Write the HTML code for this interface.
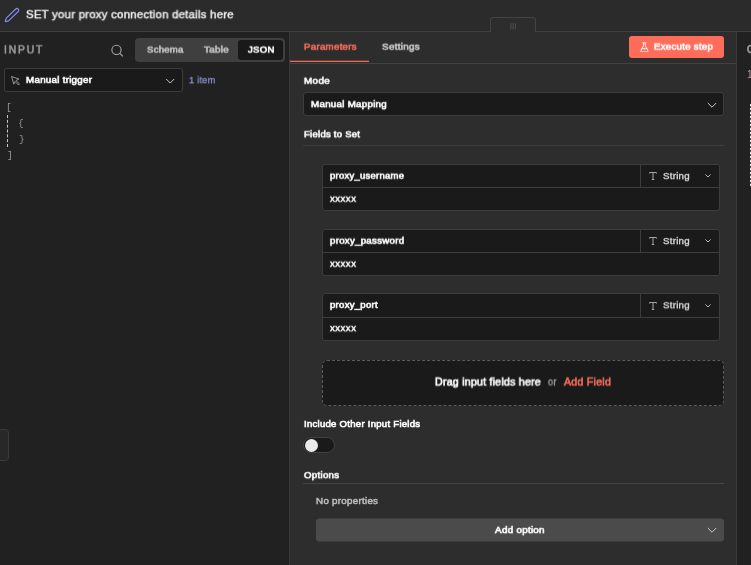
<!DOCTYPE html>
<html>
<head>
<meta charset="utf-8">
<title>n8n node</title>
<style>
*{box-sizing:border-box;margin:0;padding:0}
html,body{width:751px;height:565px;overflow:hidden;background:#2d2d2d;font-family:"Liberation Sans",sans-serif;color:#fff;font-size:10.5px}
.a,.t,svg{position:absolute}
.t{left:0;top:0;white-space:nowrap;font-weight:bold;will-change:transform;transform-origin:0 0;line-height:14px}
.inp{background:#1a1a1a;border:1px solid #3d3d3d;border-radius:3px}
.ln{background:#3d3d3d}
</style>
</head>
<body>
<!-- PANELS -->
<div class="a" style="left:0;top:0;width:751px;height:32px;background:#2b2b2b;border-bottom:1px solid #3e3e3e"></div>
<div class="a" style="left:0;top:32px;width:290px;height:533px;background:#212121;border-right:1px solid #383838"></div>
<div class="a" style="left:290px;top:32px;width:446px;height:533px;background:#2d2d2d"></div>
<div class="a" style="left:736px;top:32px;width:15px;height:533px;background:#212121;border-left:1px solid #3a3a3a"></div>
<!-- drag handle tab -->
<div class="a" style="left:490px;top:17px;width:46px;height:15px;background:#2d2d2d;border:1px solid #434343;border-bottom:none;border-radius:3px 3px 0 0"></div>
<svg style="left:508px;top:20px" width="12" height="12" viewBox="0 0 12 12"><path d="M2.9 3.2 V9.4 M5.15 3.2 V9.4 M7.4 3.2 V9.4" stroke="#515151" stroke-width="1" fill="none"/></svg>
<!-- pencil -->
<svg style="left:0;top:0" width="26" height="30" viewBox="0 0 26 30"><g transform="translate(5.3,21.6) rotate(-44.2)"><path d="M0 0 L2.8 -1.75 H16.3 A1.75 1.75 0 0 1 16.3 1.75 H2.8 Z" fill="none" stroke="#8789f5" stroke-width="1.15" stroke-linejoin="round"/></g></svg>

<!-- LEFT PANEL -->
<svg style="left:110.4px;top:42.6px" width="14" height="14" viewBox="0 0 14 14"><circle cx="6.5" cy="6.9" r="4.6" fill="none" stroke="#a6a6a6" stroke-width="1.1"/><path d="M9.8 10.3 L12.5 13" stroke="#a6a6a6" stroke-width="1.1" stroke-linecap="round"/></svg>
<div class="a" style="left:135px;top:38px;width:150px;height:24px;background:#3f3f3f;border-radius:4px"></div>
<div class="a" style="left:238px;top:40px;width:45px;height:20px;background:#191919;border-radius:3px"></div>
<div class="a inp" style="left:4px;top:68px;width:179px;height:24px"></div>
<svg style="left:10px;top:75px" width="12" height="12" viewBox="0 0 12 12"><path d="M1.5 1.5 L9 4 L6 5.5 L9.5 9 L8.5 10 L5 6.5 L3.8 9.2 Z" fill="none" stroke="#b0b0b0" stroke-width="0.8" stroke-linejoin="round"/></svg>
<svg style="left:165px;top:77px" width="10" height="8" viewBox="0 0 10 8"><path d="M1.2 2 L5.2 6 L9.2 2" fill="none" stroke="#c8c8c8" stroke-width="1"/></svg>
<div class="a" style="left:7px;top:115px;width:0;height:32px;border-left:1px dashed #c8c8c8"></div>
<div class="a" style="left:-3px;top:429px;width:12px;height:32px;background:#282828;border:1px solid #3a3a3a;border-radius:4px"></div>

<!-- CENTER PANEL -->
<div class="a ln" style="left:290px;top:63px;width:446px;height:1px;background:#424242"></div>
<div class="a" style="left:290px;top:60px;width:79px;height:1px;background:#6a3d37"></div>
<div class="a" style="left:290px;top:61px;width:79px;height:1px;background:#f06c59"></div>
<div class="a" style="left:629px;top:36px;width:95px;height:22px;background:#ff6d5a;border-radius:3px"></div>
<svg style="left:638.5px;top:41.6px" width="10.8" height="10.8" viewBox="0 0 24 24" fill="none" stroke="#fff" stroke-width="2" stroke-linecap="round" stroke-linejoin="round"><path d="M14 2v6a2 2 0 0 0 .245.96l5.51 10.08A2 2 0 0 1 18 22H6a2 2 0 0 1-1.755-2.96l5.51-10.08A2 2 0 0 0 10 8V2"/><path d="M6.453 15h11.094"/><path d="M8.5 2h7"/></svg>

<div class="a inp" style="left:303px;top:92px;width:421px;height:24px"></div>
<svg style="left:707px;top:100.6px" width="10" height="8" viewBox="0 0 10 8"><path d="M0.8 2 L5 6.2 L9.2 2" fill="none" stroke="#c8c8c8" stroke-width="1"/></svg>
<div class="a ln" style="left:303px;top:145px;width:421px;height:1px"></div>

<!-- field rows -->
<div class="a inp" style="left:322px;top:164px;width:398px;height:47px"></div>
<div class="a ln" style="left:323px;top:187px;width:396px;height:1px"></div>
<div class="a ln" style="left:640px;top:165px;width:1px;height:22px"></div>
<svg style="left:648px;top:171px" width="10" height="10" viewBox="0 0 10 10"><path d="M1.6 2.6 V1.5 H8.4 V2.6 M5 1.5 V8.5 M3.8 8.5 H6.2" fill="none" stroke="#b4b4b4" stroke-width="0.9"/></svg>
<svg style="left:704px;top:173px" width="8" height="6" viewBox="0 0 8 6"><path d="M1.4 1.4 L4 4 L6.6 1.4" fill="none" stroke="#b4b4b4" stroke-width="1"/></svg>

<div class="a inp" style="left:322px;top:229px;width:398px;height:47px"></div>
<div class="a ln" style="left:323px;top:252px;width:396px;height:1px"></div>
<div class="a ln" style="left:640px;top:230px;width:1px;height:22px"></div>
<svg style="left:648px;top:236px" width="10" height="10" viewBox="0 0 10 10"><path d="M1.6 2.6 V1.5 H8.4 V2.6 M5 1.5 V8.5 M3.8 8.5 H6.2" fill="none" stroke="#b4b4b4" stroke-width="0.9"/></svg>
<svg style="left:704px;top:238px" width="8" height="6" viewBox="0 0 8 6"><path d="M1.4 1.4 L4 4 L6.6 1.4" fill="none" stroke="#b4b4b4" stroke-width="1"/></svg>

<div class="a inp" style="left:322px;top:293px;width:398px;height:48px"></div>
<div class="a ln" style="left:323px;top:317px;width:396px;height:1px"></div>
<div class="a ln" style="left:640px;top:294px;width:1px;height:23px"></div>
<svg style="left:648px;top:300.8px" width="10" height="10" viewBox="0 0 10 10"><path d="M1.6 2.6 V1.5 H8.4 V2.6 M5 1.5 V8.5 M3.8 8.5 H6.2" fill="none" stroke="#b4b4b4" stroke-width="0.9"/></svg>
<svg style="left:704px;top:302.8px" width="8" height="6" viewBox="0 0 8 6"><path d="M1.4 1.4 L4 4 L6.6 1.4" fill="none" stroke="#b4b4b4" stroke-width="1"/></svg>

<!-- drop zone -->
<div class="a" style="left:322px;top:360px;width:402px;height:46px;background:#1a1a1a;border:1px dashed #5c5c5c;border-radius:5px"></div>

<!-- toggle -->
<div class="a" style="left:303px;top:437px;width:32px;height:16px;background:#1a1a1a;border:1px solid #424242;border-radius:8px"></div>
<div class="a" style="left:305px;top:438.7px;width:13px;height:13px;background:#ebe9e9;border-radius:7px"></div>

<!-- options -->
<div class="a ln" style="left:303px;top:483px;width:421px;height:1px;background:#444"></div>
<div class="a" style="left:316px;top:518px;width:408px;height:23px;background:#4b4b4b;border-radius:3px;transform:translateY(.6px)"></div>
<svg style="left:707px;top:526px" width="10" height="8" viewBox="0 0 10 8"><path d="M0.8 2 L5 6.2 L9.2 2" fill="none" stroke="#c8c8c8" stroke-width="1"/></svg>

<!-- RIGHT PANEL -->
<div class="t" style="left:747.2px;top:43.3px;font-size:10px;color:#a0a0a0;font-weight:normal;-webkit-text-stroke:0.6px #a0a0a0">O</div>
<div class="t" style="left:746.9px;top:68px;font-size:10px;line-height:14px;color:#b99b9b;font-weight:normal">1</div>
<div class="a" style="left:750px;top:104px;width:1px;height:82px;background:repeating-linear-gradient(#e0e0e0 0 2px,#555 2px 4px)"></div>

<!-- JSON -->
<div class="t" style="left:6.2px;top:100.8px;font-family:'Liberation Mono',monospace;font-size:9.6px;color:#9898a2;font-weight:normal">[</div>
<div class="t" style="left:18.2px;top:117.2px;font-family:'Liberation Mono',monospace;font-size:9.6px;color:#9898a2;font-weight:normal">{</div>
<div class="t" style="left:18.5px;top:133px;font-family:'Liberation Mono',monospace;font-size:9.6px;color:#9898a2;font-weight:normal">}</div>
<div class="t" style="left:7.2px;top:148.9px;font-family:'Liberation Mono',monospace;font-size:9.6px;color:#9898a2;font-weight:normal">]</div>

<!-- TEXT -->
<div class="t" style="font-size:11.5px;transform:translate(26px,7.20px) rotate(.02deg) scaleX(0.9901);color:#f2f2f2;letter-spacing:0.25px;font-weight:normal;-webkit-text-stroke:0.4px #f2f2f2">SET your proxy connection details here</div>
<div class="t" style="font-size:10px;transform:translate(4px,43.40px) rotate(.02deg) scaleX(1.0411);color:#a0a0a0;letter-spacing:1.7px;font-weight:normal;-webkit-text-stroke:0.45px #a0a0a0">INPUT</div>
<div class="t" style="font-size:9.4px;transform:translate(147px,42.60px) rotate(.02deg) scaleX(1.0185);color:#c6c6c6;letter-spacing:0.25px;font-weight:normal;-webkit-text-stroke:0.6px #c6c6c6">Schema</div>
<div class="t" style="font-size:9.4px;transform:translate(204px,42.60px) rotate(.02deg) scaleX(1.0562);color:#c6c6c6;letter-spacing:0.25px;font-weight:normal;-webkit-text-stroke:0.6px #c6c6c6">Table</div>
<div class="t" style="font-size:9.4px;transform:translate(248px,42.60px) rotate(.02deg) scaleX(1.0247);color:#fff;letter-spacing:0.25px;font-weight:normal;-webkit-text-stroke:0.6px #fff">JSON</div>
<div class="t" style="font-size:9.4px;transform:translate(26px,72.90px) rotate(.02deg) scaleX(1.0436);color:#fff;letter-spacing:0.25px;font-weight:normal;-webkit-text-stroke:0.6px #fff">Manual trigger</div>
<div class="t" style="font-size:9.6px;transform:translate(189px,73.20px) rotate(.02deg) scaleX(0.9568);color:#8c95cc;letter-spacing:0.25px;font-weight:normal;-webkit-text-stroke:0.3px #8c95cc">1 item</div>
<div class="t" style="font-size:9.4px;transform:translate(304px,39.70px) rotate(.02deg) scaleX(1.0369);color:#f06c59;letter-spacing:0.25px;font-weight:normal;-webkit-text-stroke:0.6px #f06c59">Parameters</div>
<div class="t" style="font-size:9.4px;transform:translate(382px,39.70px) rotate(.02deg) scaleX(1.0546);color:#c8c8c8;letter-spacing:0.25px;font-weight:normal;-webkit-text-stroke:0.6px #c8c8c8">Settings</div>
<div class="t" style="font-size:9.4px;transform:translate(654px,39.60px) rotate(.02deg) scaleX(1.0329);color:#fff;letter-spacing:0.25px;font-weight:normal;-webkit-text-stroke:0.6px #fff">Execute step</div>
<div class="t" style="font-size:9.4px;transform:translate(304px,73.80px) rotate(.02deg) scaleX(1.0589);color:#fff;letter-spacing:0.25px;font-weight:normal;-webkit-text-stroke:0.6px #fff">Mode</div>
<div class="t" style="font-size:9.4px;transform:translate(311px,97.20px) rotate(.02deg) scaleX(1.0435);color:#fff;letter-spacing:0.25px;font-weight:normal;-webkit-text-stroke:0.6px #fff">Manual Mapping</div>
<div class="t" style="font-size:9.4px;transform:translate(304px,127.30px) rotate(.02deg) scaleX(1.0162);color:#fff;letter-spacing:0.25px;font-weight:normal;-webkit-text-stroke:0.6px #fff">Fields to Set</div>
<div class="t" style="font-size:9.4px;transform:translate(330px,168.70px) rotate(.02deg) scaleX(1.0129);color:#fff;letter-spacing:0.25px;font-weight:normal;-webkit-text-stroke:0.6px #fff">proxy_username</div>
<div class="t" style="font-size:9.4px;transform:translate(330px,191.70px) rotate(.02deg) scaleX(1.0175);color:#fff;letter-spacing:0.5px;font-weight:normal;-webkit-text-stroke:0.45px #fff">xxxxx</div>
<div class="t" style="font-size:9.7px;transform:translate(663px,169.10px) rotate(.02deg) scaleX(1.0012);color:#dcdcdc;letter-spacing:0.25px;font-weight:normal;-webkit-text-stroke:0.35px #dcdcdc">String</div>
<div class="t" style="font-size:9.4px;transform:translate(330px,233.70px) rotate(.02deg) scaleX(1.0351);color:#fff;letter-spacing:0.25px;font-weight:normal;-webkit-text-stroke:0.6px #fff">proxy_password</div>
<div class="t" style="font-size:9.4px;transform:translate(330px,256.70px) rotate(.02deg) scaleX(1.0175);color:#fff;letter-spacing:0.5px;font-weight:normal;-webkit-text-stroke:0.45px #fff">xxxxx</div>
<div class="t" style="font-size:9.7px;transform:translate(663px,234.10px) rotate(.02deg) scaleX(1.0012);color:#dcdcdc;letter-spacing:0.25px;font-weight:normal;-webkit-text-stroke:0.35px #dcdcdc">String</div>
<div class="t" style="font-size:9.4px;transform:translate(330px,297.90px) rotate(.02deg) scaleX(1.0226);color:#fff;letter-spacing:0.25px;font-weight:normal;-webkit-text-stroke:0.6px #fff">proxy_port</div>
<div class="t" style="font-size:9.4px;transform:translate(330px,321.20px) rotate(.02deg) scaleX(1.0175);color:#fff;letter-spacing:0.5px;font-weight:normal;-webkit-text-stroke:0.45px #fff">xxxxx</div>
<div class="t" style="font-size:9.7px;transform:translate(663px,298.30px) rotate(.02deg) scaleX(1.0012);color:#dcdcdc;letter-spacing:0.25px;font-weight:normal;-webkit-text-stroke:0.35px #dcdcdc">String</div>
<div class="t" style="font-size:10.6px;transform:translate(435px,374.50px) rotate(.02deg) scaleX(0.9976);color:#fff;letter-spacing:0.25px;font-weight:normal;-webkit-text-stroke:0.6px #fff">Drag input fields here</div>
<div class="t" style="font-size:10.6px;transform:translate(548px,374.50px) rotate(.02deg) scaleX(0.8578);color:#a2a2a2;letter-spacing:0.25px;font-weight:normal;-webkit-text-stroke:0.3px #a2a2a2">or</div>
<div class="t" style="font-size:10.6px;transform:translate(564px,374.50px) rotate(.02deg) scaleX(1.0008);color:#f06c59;letter-spacing:0.25px;font-weight:normal;-webkit-text-stroke:0.6px #f06c59">Add Field</div>
<div class="t" style="font-size:9.4px;transform:translate(304px,417.00px) rotate(.02deg) scaleX(1.0218);color:#fff;letter-spacing:0.25px;font-weight:normal;-webkit-text-stroke:0.6px #fff">Include Other Input Fields</div>
<div class="t" style="font-size:9.4px;transform:translate(304px,468.20px) rotate(.02deg) scaleX(1.0375);color:#fff;letter-spacing:0.25px;font-weight:normal;-webkit-text-stroke:0.6px #fff">Options</div>
<div class="t" style="font-size:9.4px;transform:translate(316px,494.00px) rotate(.02deg) scaleX(1.0455);color:#c6c6c6;letter-spacing:0.25px;font-weight:normal;-webkit-text-stroke:0.4px #c6c6c6">No properties</div>
<div class="t" style="font-size:9.4px;transform:translate(495px,523.10px) rotate(.02deg) scaleX(1.0520);color:#fff;letter-spacing:0.25px;font-weight:normal;-webkit-text-stroke:0.6px #fff">Add option</div>
</body>
</html>
